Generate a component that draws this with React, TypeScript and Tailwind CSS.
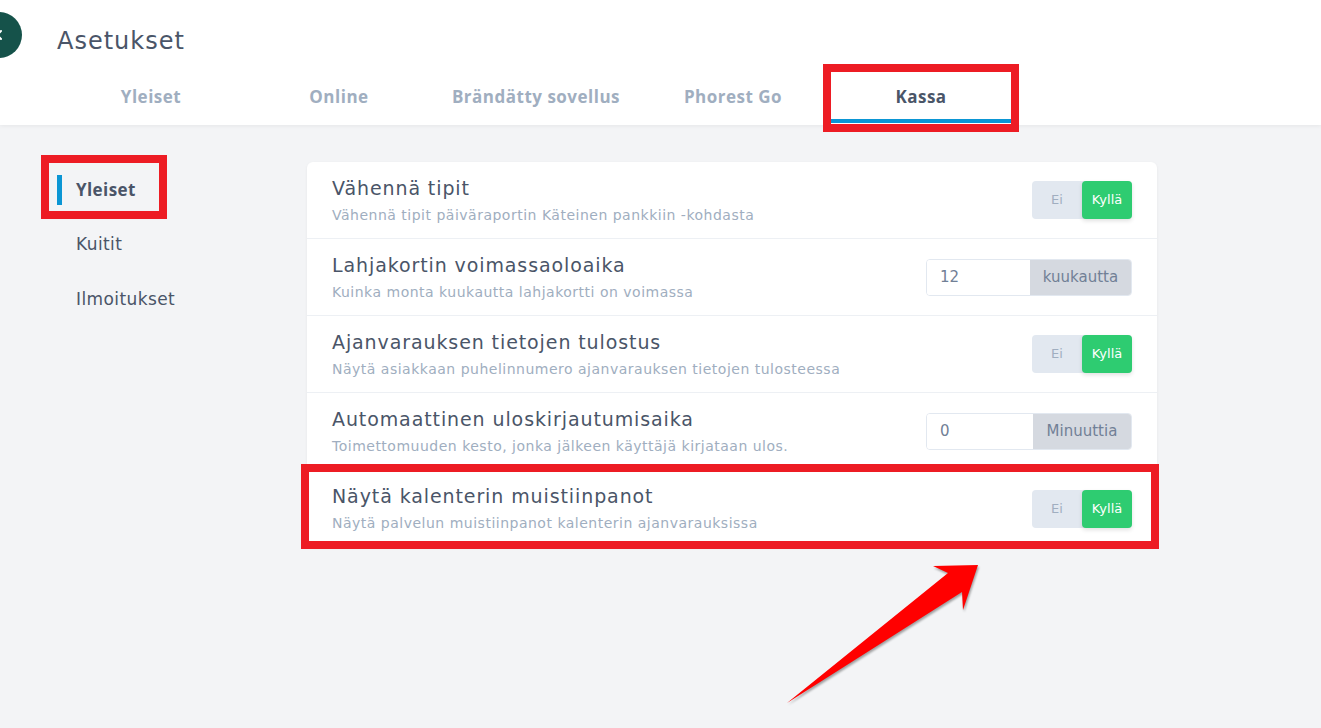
import { ChevronLeft } from "lucide-react";

type Row =
  | { title: string; sub: string; kind: "toggle" }
  | { title: string; sub: string; kind: "input"; value: string; unit: string; split: string };

const rows: Row[] = [
  { title: "Vähennä tipit", sub: "Vähennä tipit päiväraportin Käteinen pankkiin -kohdasta", kind: "toggle" },
  { title: "Lahjakortin voimassaoloaika", sub: "Kuinka monta kuukautta lahjakortti on voimassa", kind: "input", value: "12", unit: "kuukautta", split: "w-[103px]" },
  { title: "Ajanvarauksen tietojen tulostus", sub: "Näytä asiakkaan puhelinnumero ajanvarauksen tietojen tulosteessa", kind: "toggle" },
  { title: "Automaattinen uloskirjautumisaika", sub: "Toimettomuuden kesto, jonka jälkeen käyttäjä kirjataan ulos.", kind: "input", value: "0", unit: "Minuuttia", split: "w-[106px]" },
  { title: "Näytä kalenterin muistiinpanot", sub: "Näytä palvelun muistiinpanot kalenterin ajanvarauksissa", kind: "toggle" },
];

const tabs = [
  { label: "Yleiset", w: "w-[180px]" },
  { label: "Online", w: "w-[180px]" },
  { label: "Brändätty sovellus", w: "w-[198px]" },
  { label: "Phorest Go", w: "w-[180px]" },
  { label: "Kassa", w: "w-[180px]" },
];

const BODY = "'DejaVu Sans', 'Open Sans', sans-serif";

function Toggle() {
  return (
    <div className="flex h-[38px] w-[100px] rounded-[4px] bg-[#e2e8f0] text-[13px]">
      <div className="flex w-1/2 items-center justify-center text-[#a0aec0]">Ei</div>
      <div className="flex w-1/2 items-center justify-center rounded-[4px] bg-[#2ecc71] font-medium text-white shadow-[0_2px_4px_rgba(0,0,0,0.12)]">
        Kyllä
      </div>
    </div>
  );
}

function UnitInput({ value, unit, split }: { value: string; unit: string; split: string }) {
  return (
    <div className="flex h-[37px] w-[206px] overflow-hidden rounded-[4px] border border-[#e2e8f0] text-[15px] text-[#718096]">
      <div className={`${split} flex items-center bg-white pl-[13px]`}>{value}</div>
      <div className="flex flex-1 items-center justify-center bg-[#d5d9e0]">{unit}</div>
    </div>
  );
}

export default function App() {
  return (
    <div
      className="relative h-screen w-full overflow-hidden bg-[#f3f4f6]"
      style={{ fontFamily: "'Open Sans', sans-serif" }}
    >
      {/* Header */}
      <div className="relative z-10 h-[125px] bg-white shadow-[0_1px_4px_rgba(0,0,0,0.06)]">
        <div className="flex h-[70px] items-center">
          <div className="-ml-[24px] flex h-[46px] w-[46px] items-center justify-center rounded-full bg-[#15524a]">
            <ChevronLeft className="h-[16px] w-[16px] text-white" strokeWidth={3} />
          </div>
          <h1
            className="ml-[35px] mt-[12px] text-[24px] tracking-[1px] text-[#4a5568]"
            style={{ fontFamily: BODY }}
          >
            Asetukset
          </h1>
        </div>
        <div className="flex h-[55px] gap-2 pl-[61px]">
          {tabs.map((t) => {
            const active = t.label === "Kassa";
            return (
              <div
                key={t.label}
                className={
                  active
                    ? `${t.w} flex h-[53px] items-center justify-center border-b-4 border-[#0b96d4] pt-[4px] text-[17px] font-bold tracking-[0.5px] text-[#4a5568]`
                    : `${t.w} flex h-[53px] items-center justify-center border-b-4 border-transparent pt-[4px] text-[17px] font-bold tracking-[0.5px] text-[#a0aec0]`
                }
              >
                {t.label}
              </div>
            );
          })}
        </div>
      </div>

      {/* Body */}
      <div className="flex pt-[37px]">
        <nav className="w-[307px] shrink-0 pl-[57px] text-[17px] text-[#4a5568]">
          <div className="flex h-[55px] items-center">
            <span className="h-[30px] w-[5px] bg-[#0b96d4]" />
            <span className="ml-[14px] font-bold tracking-[0.4px]">Yleiset</span>
          </div>
          <div className="flex h-[55px] items-center pl-[19px] tracking-[0.4px]" style={{ fontFamily: BODY }}>
            Kuitit
          </div>
          <div className="flex h-[55px] items-center pl-[19px] tracking-[0.4px]" style={{ fontFamily: BODY }}>
            Ilmoitukset
          </div>
        </nav>

        <div
          className="w-[850px] overflow-hidden rounded-[6px] bg-white shadow-[0_1px_3px_rgba(0,0,0,0.06)]"
          style={{ fontFamily: BODY }}
        >
          {rows.map((r, i) => (
            <div
              key={r.title}
              className={
                i < rows.length - 1
                  ? "flex h-[77px] items-center justify-between border-b border-[#edf0f4] px-[25px]"
                  : "flex h-[77px] items-center justify-between px-[25px]"
              }
            >
              <div>
                <div className="text-[19px] leading-[24px] tracking-[0.9px] text-[#4a5568]">{r.title}</div>
                <div className="mt-[5px] text-[14px] leading-[20px] tracking-[0.5px] text-[#a0aec0]">{r.sub}</div>
              </div>
              {r.kind === "toggle" ? <Toggle /> : <UnitInput value={r.value} unit={r.unit} split={r.split} />}
            </div>
          ))}
        </div>
      </div>

      {/* Annotations */}
      <div className="absolute left-[823px] top-[64px] z-20 h-[68px] w-[196px] border-[8px] border-[#ed1c24]" />
      <div className="absolute left-[41px] top-[155px] z-20 h-[64px] w-[126px] border-[8px] border-[#ed1c24]" />
      <div className="absolute left-[301px] top-[464px] z-20 h-[85px] w-[858px] border-[8px] border-[#ed1c24]" />
      <svg
        className="absolute left-0 top-0 z-20"
        width="1321"
        height="728"
        style={{ filter: "drop-shadow(1px 2px 1px rgba(0,0,0,0.35))" }}
      >
        <polygon points="787,703 948,573 933,566 978,565 963,610 962,592" fill="#ff0000" />
      </svg>
    </div>
  );
}
